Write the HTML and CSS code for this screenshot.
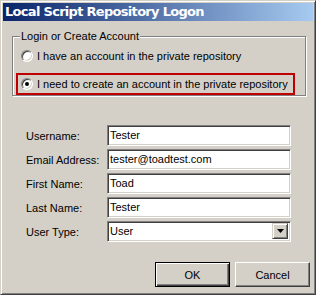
FILE: index.html
```html
<!DOCTYPE html>
<html lang="en">
<head>
  <meta charset="UTF-8">
  <title>Local Script Repository Logon</title>
  <link rel="stylesheet" href="styles.css">
</head>
<body>
  <div class="window">
    <div class="titlebar">Local Script Repository Logon</div>

    <fieldset class="group">
      <legend>Login or Create Account</legend>
      <label class="option">
        <span class="radio"></span>
        I have an account in the private repository
      </label>
      <label class="option selected">
        <span class="radio checked"></span>
        I need to create an account in the private repository
      </label>
    </fieldset>

    <div class="form">
      <div class="row">
        <span class="label">Username:</span>
        <span class="field">Tester</span>
      </div>
      <div class="row">
        <span class="label">Email Address:</span>
        <span class="field">tester@toadtest.com</span>
      </div>
      <div class="row">
        <span class="label">First Name:</span>
        <span class="field">Toad</span>
      </div>
      <div class="row">
        <span class="label">Last Name:</span>
        <span class="field">Tester</span>
      </div>
      <div class="row">
        <span class="label">User Type:</span>
        <span class="field combo">
          <span class="value">User</span>
          <span class="drop"><svg width="7" height="4" viewBox="0 0 7 4"><path d="M0 0h7L3.5 4z" fill="#000"/></svg></span>
        </span>
      </div>
    </div>

    <div class="buttons">
      <button class="btn default">OK</button>
      <button class="btn">Cancel</button>
    </div>
  </div>
</body>
</html>
```

FILE: styles.css
```css
*, *:before, *:after{
  padding: 0;
  margin: 0;
  box-sizing: border-box;
}
body{
  background: #d4d0c8;
  font-family: "Liberation Sans", Arial, sans-serif;
  font-size: 11px;
  color: #000;
}
.window{
  width: 316px;
  height: 295px;
  background: #d4d0c8;
  border: 1px solid;
  border-color: #d4d0c8 #404040 #404040 #d4d0c8;
  box-shadow: inset 1px 1px 0 #fff, inset -1px -1px 0 #808080;
  padding: 2px 2px;
  display: flex;
  flex-direction: column;
}
.titlebar{
  height: 18px;
  background: linear-gradient(to right, #0a246a, #a6caf0);
  color: #fff;
  font-family: "DejaVu Sans", Verdana, sans-serif;
  font-weight: bold;
  font-size: 13px;
  letter-spacing: -0.7px;
  line-height: 18px;
  padding-left: 2px;
}
.group{
  margin: 9px 7px 0 9px;
  height: 66px;
  border: 1px solid #808080;
  box-shadow: 1px 1px 0 #fff, inset 1px 1px 0 #fff;
  padding: 0 0 0 6px;
  display: flex;
  flex-direction: column;
}
.group legend{
  margin-left: 1px;
  padding: 0 1px;
  background: #d4d0c8;
  line-height: 13px;
}
.option{
  display: flex;
  align-items: center;
  gap: 4px;
  height: 22px;
  padding-left: 2px;
}
.option:first-of-type{
  margin-top: 2px;
}
.selected{
  margin-top: 6px;
  margin-left: -3px;
  width: 279px;
  border: 2px solid #c00000;
  padding-left: 3px;
}
.radio{
  width: 12px;
  height: 12px;
  border-radius: 50%;
  background: #fff;
  border: 1px solid;
  border-color: #808080 #fff #fff #808080;
  box-shadow: inset 1px 1px 0 #404040, inset -1px -1px 0 #d4d0c8;
  display: flex;
  align-items: center;
  justify-content: center;
}
.checked:after{
  content: "";
  width: 4px;
  height: 4px;
  border-radius: 50%;
  background: #000;
}
.form{
  margin-top: 29px;
  padding-left: 23px;
  display: flex;
  flex-direction: column;
  gap: 3px;
}
.row{
  display: flex;
  align-items: center;
}
.label{
  width: 81px;
}
.field{
  width: 184px;
  height: 21px;
  background: #fff;
  border: 1px solid;
  border-color: #808080 #fff #fff #808080;
  box-shadow: inset 1px 1px 0 #404040, inset -1px -1px 0 #d4d0c8;
  padding: 0 2px;
  line-height: 19px;
}
.combo{
  display: flex;
  justify-content: space-between;
  padding-right: 2px;
}
.drop{
  width: 16px;
  height: 16px;
  margin-top: 1px;
  background: #d4d0c8;
  border: 1px solid;
  border-color: #d4d0c8 #404040 #404040 #d4d0c8;
  box-shadow: inset 1px 1px 0 #fff, inset -1px -1px 0 #808080;
  display: flex;
  align-items: center;
  justify-content: center;
}
.buttons{
  margin-top: auto;
  margin-bottom: 5px;
  display: flex;
  justify-content: flex-end;
  gap: 5px;
  padding-right: 3px;
}
.btn{
  width: 75px;
  height: 25px;
  background: #d4d0c8;
  font-family: inherit;
  font-size: 11px;
  border: 1px solid;
  border-color: #fff #404040 #404040 #fff;
  box-shadow: inset -1px -1px 0 #808080;
}
.default{
  border: 1px solid #000;
  box-shadow: inset 1px 1px 0 #fff, inset -1px -1px 0 #404040, inset -2px -2px 0 #808080;
}
```
